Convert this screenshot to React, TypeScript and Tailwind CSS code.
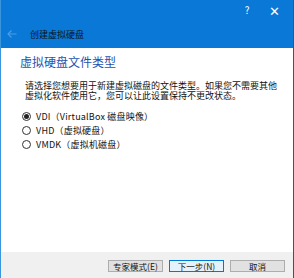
import React, { useState } from 'react';

const FONT = { fontFamily: '"Noto Sans CJK SC", "Liberation Sans", sans-serif' };

const OPTIONS = [
  { id: 'vdi', label: 'VDI（VirtualBox 磁盘映像）' },
  { id: 'vhd', label: 'VHD（虚拟硬盘）' },
  { id: 'vmdk', label: 'VMDK（虚拟机磁盘）' },
];

export default function App() {
  const [choice, setChoice] = useState('vdi');

  return (
    <div
      className="w-[294px] h-[278px] flex flex-col border-l border-l-[#3b95dc] border-r border-r-[#505050] bg-white overflow-hidden"
      style={FONT}
    >
      {/* Title bar */}
      <div className="h-[48px] bg-[#0a78d6] flex flex-col shrink-0">
        <div className="h-[20px] flex items-center justify-end text-white">
          <span className="w-[24px] text-center text-[10px] leading-none">?</span>
          <span className="w-[34px] text-center text-[13px] leading-none pr-[4px]">✕</span>
        </div>
        <div className="flex-1 flex items-center pl-[6px] gap-[13px]">
          <svg width="10" height="8" viewBox="0 0 10 8" className="text-[#4b9be2]">
            <path d="M9.5 4H1M4.5 0.5L1 4l3.5 3.5" fill="none" stroke="currentColor" strokeWidth="1.2" />
          </svg>
          <span className="text-[9px] leading-none text-[#0a1420]">创建虚拟硬盘</span>
        </div>
      </div>

      {/* Content */}
      <div className="flex-1 flex flex-col pt-[7px]">
        <h1 className="pl-[19px] text-[12px] leading-[14px] text-[#1f52ad] font-normal">虚拟硬盘文件类型</h1>
        <p className="pl-[24px] pr-[10px] mt-[12px] text-[9px] leading-[10px] text-[#111]">
          请选择您想要用于新建虚拟磁盘的文件类型。如果您不需要其他虚拟化软件使用它，您可以让此设置保持不更改状态。
        </p>
        <div className="flex flex-col mt-[8px] pl-[21px]">
          {OPTIONS.map((opt) => (
            <label key={opt.id} className="h-[14px] flex items-center gap-[5px] cursor-pointer" onClick={() => setChoice(opt.id)}>
              <span className="w-[9px] h-[9px] rounded-full border border-[#333] bg-white flex items-center justify-center">
                {choice === opt.id && <span className="w-[5px] h-[5px] rounded-full bg-[#222]" />}
              </span>
              <span className="text-[9px] leading-none text-[#111] tracking-[0.2px]">{opt.label}</span>
            </label>
          ))}
        </div>
      </div>

      {/* Footer */}
      <div className="h-[26px] bg-[#f0f0f0] shrink-0 flex items-start justify-end gap-[6px] pt-[8px] pr-[8px]">
        <button className="w-[55px] h-[12px] bg-[#e1e1e1] border border-[#adadad] text-[8.5px] leading-none text-[#111]">专家模式(E)</button>
        <button className="w-[55px] h-[12px] bg-[#e5f1fb] border border-[#0078d7] text-[8.5px] leading-none text-[#111]">下一步(N)</button>
        <button className="w-[55px] h-[12px] bg-[#e1e1e1] border border-[#adadad] text-[8.5px] leading-none text-[#111]">取消</button>
      </div>
    </div>
  );
}
